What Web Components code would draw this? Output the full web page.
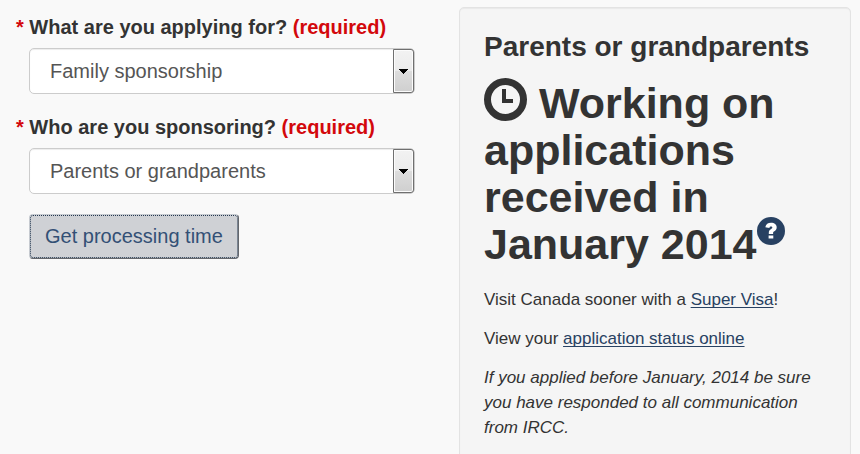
<!DOCTYPE html>
<html lang="en">
<head>
<meta charset="utf-8">
<meta name="viewport" content="width=device-width, initial-scale=1">
<title>Check processing times</title>
<style>
  body { margin: 0; background: #f9f9f9; color: #333; font-family: "Liberation Sans", Arial, sans-serif; }
</style>
</head>
<body>
<processing-page>
  <request-form slot="form">
    <select-field label="What are you applying for?" name="category">Family sponsorship</select-field>
    <select-field label="Who are you sponsoring?" name="relation">Parents or grandparents</select-field>
    <action-button>Get processing time</action-button>
  </request-form>
  <result-card slot="result">
    <span slot="title">Parents or grandparents</span>
    <span slot="answer">Working on applications received in January 2014</span>
    <text-block>Visit Canada sooner with a <text-link href="#super-visa">Super Visa</text-link>!</text-block>
    <text-block>View your <text-link href="#status">application status online</text-link></text-block>
    <text-block note>If you applied before January, 2014 be sure you have responded to all communication from IRCC.</text-block>
  </result-card>
</processing-page>

<script>
const define = (name, html, setup) => {
  const template = document.createElement('template');
  template.innerHTML = html;
  customElements.define(name, class extends HTMLElement {
    constructor() {
      super();
      this.attachShadow({ mode: 'open' }).append(template.content.cloneNode(true));
    }
    connectedCallback() { if (setup) setup(this, this.shadowRoot); }
  });
};

define('processing-page', `
  <style>
    :host { display: block; height: 100vh; overflow: hidden; }
    main { display: grid; grid-template-columns: minmax(0, 1fr) minmax(0, 1fr); column-gap: 44px; align-items: start; padding: 7px 9px 0 23px; }
  </style>
  <main><slot name="form"></slot><slot name="result"></slot></main>`);

define('request-form', `
  <style>
    :host { display: block; padding: 7px 0 0 6px; }
    form { display: flex; flex-direction: column; align-items: stretch; gap: 20px; }
  </style>
  <form><slot></slot></form>`);

define('select-field', `
  <style>
    :host { display: block; }
    label { display: block; font-size: 20px; line-height: 26px; font-weight: bold; margin-bottom: 8px; }
    .star { margin-left: -13px; }
    .star, .required { color: #d3080c; }
    .box { display: grid; grid-template-columns: minmax(0, 1fr) 22px; }
    select {
      grid-area: 1 / 1 / 2 / 3; appearance: none; box-sizing: border-box; width: 100%; height: 46px; margin: 0;
      padding: 0 42px 0 20px; border: 1px solid #ccc; border-radius: 5px; background: #fff;
      box-shadow: inset 0 1px 1px rgba(0,0,0,.075); color: #555; font: 20px "Liberation Sans", Arial, sans-serif;
    }
    .arrow {
      grid-area: 1 / 2 / 2 / 3; display: grid; place-items: center; box-sizing: border-box; margin: 1px 1px 1px 0;
      border: 1px solid #707070; border-radius: 0 3px 3px 0; box-shadow: inset 0 0 0 1px #fcfcfc;
      background: linear-gradient(#f2f2f2, #ebebeb 50%, #dddddd 50%, #cfcfcf); pointer-events: none;
    }
    svg { display: block; }
  </style>
  <label for="choice"><span class="star">*</span> <span class="text"></span> <span class="required">(required)</span></label>
  <div class="box">
    <select id="choice" required><option selected></option></select>
    <span class="arrow"><svg width="9" height="5" viewBox="0 0 9 5" shape-rendering="crispEdges" aria-hidden="true"><path d="M0 0h9v1H8v1H7v1H6v1H5v1H4V4H3V3H2V2H1V1H0z"/></svg></span>
  </div>`, (host, root) => {
    root.querySelector('.text').textContent = host.getAttribute('label');
    root.querySelector('select').name = host.getAttribute('name');
    root.querySelector('option').textContent = host.textContent.trim();
  });

define('action-button', `
  <style>
    :host { display: block; }
    button {
      height: 45px; margin: 0; padding: 0 15px; border: 1px solid #c6cad0; border-right-color: #64676c; border-bottom-color: #64676c;
      border-radius: 4px; background: #cfd1d5; color: #335075; outline: 1px dotted #243850; outline-offset: -2px;
      font: 20px "Liberation Sans", Arial, sans-serif;
    }
  </style>
  <button type="button"><slot></slot></button>`);

define('result-card', `
  <style>
    :host {
      display: block; box-sizing: border-box; padding: 23px 24px 24px; border: 1px solid #e3e3e3; border-radius: 5px;
      background: #f5f5f5; box-shadow: inset 0 1px 1px rgba(0,0,0,.05);
    }
    h2 { margin: 0; font-size: 28px; line-height: 32px; }
    .answer { margin: 17px 0 19px; font-size: 43px; line-height: 47px; font-weight: bold; }
    .clock { margin-top: -8px; vertical-align: -3px; }
    button { margin: -8px 0 0; padding: 0; border: 0; background: none; vertical-align: 14px; font-size: 20px; line-height: 28px; height: 28px; }
    button svg { display: block; }
  </style>
  <h2><slot name="title"></slot></h2>
  <p class="answer"><svg class="clock" width="43" height="43" viewBox="0 0 43 43" aria-hidden="true"><circle cx="21.5" cy="21.5" r="18" fill="none" stroke="#333" stroke-width="7"/><path d="M18 11h4v10h7v4H18z" fill="#333"/></svg> <slot name="answer"></slot><button type="button" aria-label="Help"><svg width="28" height="28" viewBox="0 0 28 28" aria-hidden="true"><circle cx="14" cy="14" r="14" fill="#284162"/><path d="M8.3 10.2C8.9 7.1 11 5.7 14 5.7c3.5 0 5.7 1.8 5.7 4.6 0 2.1-1 3.2-2.7 4.2-.7.4-.9.8-.9 1.6v.8h-4.3v-1.1c0-2 .8-2.8 2.4-3.8.8-.5 1.1-.8 1.1-1.4 0-.7-.5-1-1.3-1-.9 0-1.4.4-1.6 1.3zM11.6 18.6h4.7v2.8h-4.7z" fill="#fff"/></svg></button></p>
  <slot></slot>`);

define('text-block', `
  <style>
    :host { display: block; margin-bottom: 14px; font-size: 17px; line-height: 25px; }
    :host([note]) { font-style: italic; }
    p { margin: 0; }
  </style>
  <p><slot></slot></p>`);

define('text-link', `
  <style>
    :host { display: inline; }
    a { color: #284162; text-decoration: underline; text-decoration-thickness: 1px; text-underline-offset: 2px; text-decoration-skip-ink: none; }
  </style>
  <a><slot></slot></a>`, (host, root) => { root.querySelector('a').setAttribute('href', host.getAttribute('href')); });
</script>
</body>
</html>
